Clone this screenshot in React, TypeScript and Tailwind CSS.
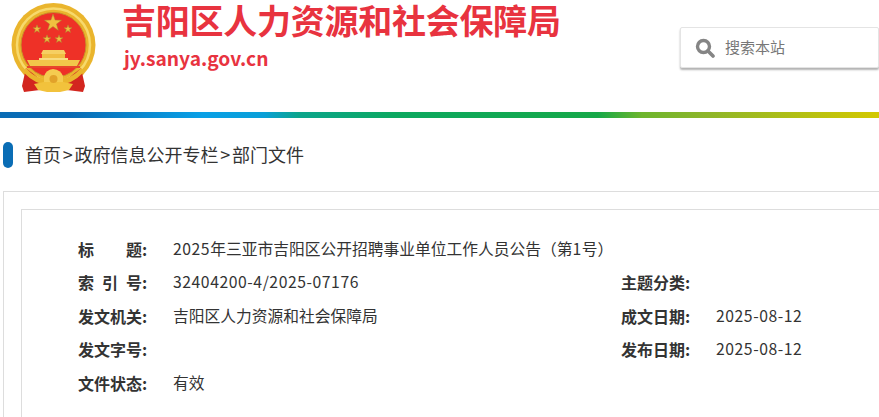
const rows = [
  { label: '索 引 号:', value: '32404200-4/2025-07176', latin: true, label2: '主题分类:', value2: '' },
  { label: '发文机关:', value: '吉阳区人力资源和社会保障局', latin: false, label2: '成文日期:', value2: '2025-08-12' },
  { label: '发文字号:', value: '', latin: false, label2: '发布日期:', value2: '2025-08-12' },
  { label: '文件状态:', value: '有效', latin: false, label2: '', value2: '' },
]

function Star({ x, y, r }: { x: number; y: number; r: number }) {
  const pts = Array.from({ length: 10 }).map((_, i) => {
    const a = (Math.PI / 5) * i - Math.PI / 2
    const d = i % 2 === 0 ? r : r * 0.4
    return `${x + Math.cos(a) * d},${y + Math.sin(a) * d}`
  })
  return <polygon points={pts.join(' ')} fill="#f0c040" stroke="#a98a30" strokeWidth="0.5" />
}

// viewBox uses the same coordinates as the page, so it is easy to compare
function Emblem() {
  return (
    <svg width="86" height="92" viewBox="10 2 86 92" className="shrink-0">
      <circle cx="53.5" cy="45" r="42" fill="#eab52d" />
      <circle cx="53.5" cy="45" r="36.5" fill="none" stroke="#f7d96c" strokeWidth="2.5" />
      <circle cx="53.5" cy="45" r="32.5" fill="#ee3127" stroke="#c9922a" strokeWidth="1" />
      <Star x={53} y={23} r={9} />
      <Star x={37} y={29} r={4.2} />
      <Star x={68} y={29} r={4.2} />
      <Star x={47} y={39} r={4.2} />
      <Star x={59} y={39} r={4.2} />
      {/* gate */}
      <path d="M43 50 H64 L66 54 H41 Z" fill="#f6cf62" />
      <rect x="42" y="54" width="23" height="4" fill="#f0bd42" />
      <rect x="39" y="58" width="29" height="2" fill="#f8dc80" />
      <path d="M27 60 H80 L76 68 H31 Z" fill="#f2c64a" />
      <rect x="27" y="66" width="53" height="2" fill="#e7452c" />
      {/* drapes */}
      <path d="M26 68 L22 86 L24 92 L40 90 L46 84 L60 84 L67 90 L83 92 L85 86 L81 68 L66 80 H41 Z" fill="#d3261f" />
      <path d="M26 68 Q38 82 53 78 Q69 82 81 68 L84 72 Q68 88 53 84 Q39 88 23 72 Z" fill="#eab52d" />
      {/* gear and ribbon */}
      <path d="M44 76 Q46 70 53 69 Q61 70 63 76 L63 84 H44 Z" fill="#f5cc50" />
      <path d="M34 84 L44 82 H63 L73 84 L69 90 L60 92 H47 L38 90 Z" fill="#f2c23c" />
      <circle cx="53.5" cy="79" r="4" fill="#e2a22a" />
    </svg>
  )
}

export default function App() {
  return (
    <div className="w-[879px] h-[417px] overflow-hidden bg-white font-['Microsoft_YaHei','Noto_Sans_CJK_SC',sans-serif] text-[#333]">
      <header className="h-[112px] flex items-start">
        <div className="ml-[10px] mt-[2px] w-[112px]">
          <Emblem />
        </div>
        <div>
          <h1 className="text-[34px] leading-[40px] font-bold tracking-[-0.25px] text-[#e8333f] whitespace-nowrap">吉阳区人力资源和社会保障局</h1>
          <p className="mt-[6px] ml-[2px] text-[19.2px] leading-[24px] font-bold text-[#e8333f]">jy.sanya.gov.cn</p>
        </div>
        <div className="ml-auto mt-[27px] w-[199px] h-[41px] bg-white border border-[#e4e4e4] rounded-[2px] shadow-[0_2px_2px_rgba(0,0,0,0.3)] flex items-center pl-[14px] gap-[10px]">
          <svg width="20" height="20" viewBox="0 0 20 20" fill="none" stroke="#858585">
            <circle cx="8.5" cy="8.5" r="6" strokeWidth="3.4" />
            <path d="M13 13 L18 18" strokeWidth="3.6" strokeLinecap="round" />
          </svg>
          <span className="text-[15px] text-[#777]">搜索本站</span>
        </div>
      </header>
      <div className="h-[6px] bg-[linear-gradient(90deg,#0a6cb5_0%,#0a6cb5_8%,#0a84cc_15%,#0aa0e6_23%,#0a9fd8_30%,#0ca58c_34%,#0ca860_45%,#16a848_68%,#6db52d_73%,#8cb52a_80%,#d3c800_100%)]" />
      <nav className="mt-[24px] ml-[3px] h-[26px] flex items-center">
        <span className="w-[10px] h-[26px] rounded-[5px] bg-[#0a6db5]" />
        <span className="ml-[12px] pb-[2px] text-[18px] text-[#333]">
          首页<span className="px-[1.75px]">&gt;</span>政府信息公开专栏<span className="px-[1.75px]">&gt;</span>部门文件
        </span>
      </nav>
      <div className="mt-[23px] ml-[3px] w-[1000px] border border-[#ddd] pt-[17px] pl-[17px]">
        <div className="border border-[#ddd] pt-[22px] pl-[56px] pb-[40px] text-[16px]">
          <div className="flex items-center h-[33.5px]">
            <span className="w-[95px] font-bold flex"><span className="w-[48px]">标</span>题:</span>
            <span className="text-[15.75px]">
              <span className="tracking-[0.55px]">2025</span>年三亚市吉阳区公开招聘事业单位工作人员公告（第<span className="tracking-[0.55px]">1</span>号）
            </span>
          </div>
          {rows.map((row) => (
            <div key={row.label} className="flex items-center h-[33.5px]">
              <span className="w-[95px] font-bold [word-spacing:4.4px]">{row.label}</span>
              <span className={row.latin ? 'w-[448px] text-[15.75px] tracking-[0.55px]' : 'w-[448px] text-[15.75px]'}>{row.value}</span>
              <span className="w-[95px] font-bold">{row.label2}</span>
              <span className="text-[15.75px] tracking-[0.55px]">{row.value2}</span>
            </div>
          ))}
        </div>
      </div>
    </div>
  )
}
